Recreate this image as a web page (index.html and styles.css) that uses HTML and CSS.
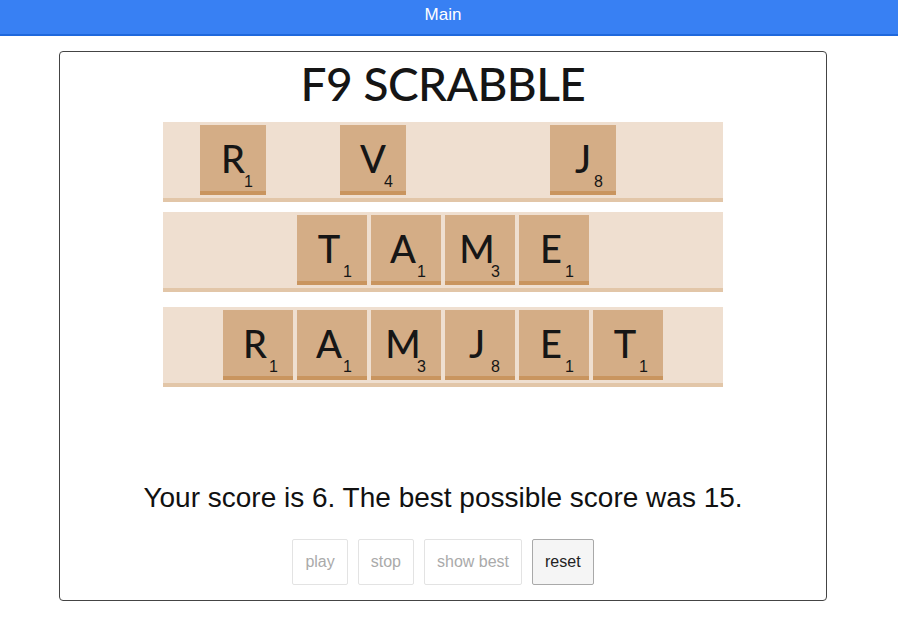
FILE: index.html
```html
<!DOCTYPE html>
<html>
<head>
<meta charset="utf-8">
<link rel="stylesheet" href="styles.css">
</head>
<body>
<header class="topbar">Main</header>
<main class="card">
  <h1 class="title">F9 SCRABBLE</h1>
  <div class="rack rack-free">
    <div class="tile tile-small" style="margin-left:37px"><span class="letter">R</span><span class="score">1</span></div>
    <div class="tile tile-small" style="margin-left:74px"><span class="letter">V</span><span class="score">4</span></div>
    <div class="tile tile-small" style="margin-left:144px"><span class="letter">J</span><span class="score">8</span></div>
  </div>
  <div class="rack rack-word rack-second">
    <div class="tile"><span class="letter">T</span><span class="score">1</span></div>
    <div class="tile"><span class="letter">A</span><span class="score">1</span></div>
    <div class="tile"><span class="letter">M</span><span class="score">3</span></div>
    <div class="tile"><span class="letter">E</span><span class="score">1</span></div>
  </div>
  <div class="rack rack-word rack-third">
    <div class="tile"><span class="letter">R</span><span class="score">1</span></div>
    <div class="tile"><span class="letter">A</span><span class="score">1</span></div>
    <div class="tile"><span class="letter">M</span><span class="score">3</span></div>
    <div class="tile"><span class="letter">J</span><span class="score">8</span></div>
    <div class="tile"><span class="letter">E</span><span class="score">1</span></div>
    <div class="tile"><span class="letter">T</span><span class="score">1</span></div>
  </div>
  <p class="result">Your score is 6. The best possible score was 15.</p>
  <div class="controls">
    <button class="btn" disabled>play</button>
    <button class="btn" disabled>stop</button>
    <button class="btn" disabled>show best</button>
    <button class="btn btn-active">reset</button>
  </div>
</main>
</body>
</html>
```

FILE: styles.css
```css
* { box-sizing: border-box; }
html, body { margin: 0; padding: 0; background: #fff; }
body { font-family: "Liberation Sans", Arial, sans-serif; color: #111; }

.topbar {
  height: 36px;
  background: #3880f3;
  border-bottom: 2px solid #1f68dc;
  color: #fff;
  font-size: 17px;
  line-height: 30px;
  text-align: center;
  padding-right: 12px;
}

.card {
  margin: 15px 0 0 59px;
  width: 768px;
  height: 550px;
  border: 1px solid #444;
  border-radius: 4px;
  padding: 8px 0 0;
  display: flex;
  flex-direction: column;
  align-items: center;
}

.title {
  margin: 0 0 14px;
  font-family: Lato, "DejaVu Sans", sans-serif;
  font-weight: 500;
  font-size: 46px;
  line-height: 48px;
  letter-spacing: -0.5px;
  color: #151515;
}

.rack {
  width: 560px;
  height: 80px;
  background: #efdfd0;
  padding-top: 3px;
  border-bottom: 4px solid #e2c6a8;
  display: flex;
}
.rack-word { justify-content: center; gap: 4px; }
.rack-second { margin-top: 10px; }
.rack-third { margin-top: 15px; }

.tile {
  position: relative;
  width: 70px;
  height: 70px;
  flex: none;
  background: #d4ad86;
  border-bottom: 4px solid #c9955f;
  display: flex;
  align-items: center;
  justify-content: center;
  padding-right: 6px;
}
.tile-small { width: 66px; padding-right: 0; }

.letter {
  font-family: Lato, "DejaVu Sans", sans-serif;
  font-weight: 500;
  font-size: 38px;
  line-height: 38px;
  color: #161616;
}
.score {
  position: absolute;
  right: 15px;
  bottom: 1px;
  font-family: "Liberation Sans", Arial, sans-serif;
  font-size: 16px;
  line-height: 16px;
  color: #161616;
}
.tile-small .score { right: 13px; }

.result {
  margin: 95px 0 0;
  font-size: 28px;
  line-height: 32px;
  color: #111;
}

.controls {
  margin-top: 25px;
  display: flex;
  gap: 10px;
}
.btn {
  height: 46px;
  padding: 0 12px;
  font-family: "Liberation Sans", Arial, sans-serif;
  font-size: 16px;
  color: #aaa;
  background: #fff;
  border: 1px solid #e3e3e3;
  border-radius: 2px;
}
.btn-active {
  color: #222;
  background: #f5f5f5;
  border-color: #a9a9a9;
}
```
